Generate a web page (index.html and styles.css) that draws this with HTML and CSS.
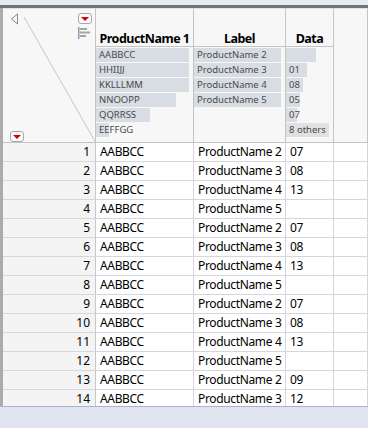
FILE: index.html
```html
<!DOCTYPE html>
<html lang="en">
<head>
  <meta charset="UTF-8">
  <title>Data Table</title>
  <link rel="stylesheet" href="styles.css">
</head>
<body>
  <div class="topbar"></div>
  <div class="divider"></div>

  <div class="frame">
    <div class="leftbar"></div>
    <div class="grid">
      <!-- header -->
      <div class="corner">
        <svg class="diag" width="93" height="134" viewBox="0 0 93 134">
          <line x1="21" y1="8" x2="93" y2="134" stroke="#c4c4c4" stroke-width="1"/>
        </svg>
        <svg class="back" width="9" height="12" viewBox="0 0 9 12">
          <path d="M7.5 1 L1.5 6 L7.5 11 Z" fill="none" stroke="#8a8a8a" stroke-width="1"/>
        </svg>
        <span class="menu menu-top"><i></i></span>
        <svg class="sort" width="13" height="12" viewBox="0 0 13 12">
          <rect x="0" y="0" width="1.5" height="12" fill="#8c9cb8"/>
          <rect x="2" y="1" width="7" height="2" fill="#9fa99f"/>
          <rect x="2" y="4.5" width="10" height="2" fill="#9fa99f"/>
          <rect x="2" y="8" width="6" height="2" fill="#9fa99f"/>
        </svg>
        <span class="menu menu-bottom"><i></i></span>
      </div>

      <div class="head">
        <div class="name">ProductName 1</div>
        <div class="bars">
          <div class="bar" style="width: 93px">AABBCC</div>
          <div class="bar" style="width: 93px">HHIIJJ</div>
          <div class="bar" style="width: 93px">KKLLLMM</div>
          <div class="bar" style="width: 80px">NNOOPP</div>
          <div class="bar" style="width: 54px">QQRRSS</div>
          <div class="bar" style="width: 13px">EEFFGG</div>
        </div>
      </div>

      <div class="head">
        <div class="name">Label</div>
        <div class="bars">
          <div class="bar" style="width: 87px">ProductName 2</div>
          <div class="bar" style="width: 87px">ProductName 3</div>
          <div class="bar" style="width: 87px">ProductName 4</div>
          <div class="bar" style="width: 87px">ProductName 5</div>
        </div>
      </div>

      <div class="head">
        <div class="name">Data</div>
        <div class="bars">
          <div class="bar" style="width: 30px"></div>
          <div class="bar" style="width: 21px">01</div>
          <div class="bar" style="width: 17px">08</div>
          <div class="bar" style="width: 14px">05</div>
          <div class="bar" style="width: 11px">07</div>
          <div class="bar other" style="width: 43px">8 others</div>
        </div>
      </div>

      <div class="head"></div>

      <!-- rows -->
      <div class="num">1</div><div class="cell">AABBCC</div><div class="cell">ProductName 2</div><div class="cell">07</div><div class="cell"></div>
      <div class="num">2</div><div class="cell">AABBCC</div><div class="cell">ProductName 3</div><div class="cell">08</div><div class="cell"></div>
      <div class="num">3</div><div class="cell">AABBCC</div><div class="cell">ProductName 4</div><div class="cell">13</div><div class="cell"></div>
      <div class="num">4</div><div class="cell">AABBCC</div><div class="cell">ProductName 5</div><div class="cell"></div><div class="cell"></div>
      <div class="num">5</div><div class="cell">AABBCC</div><div class="cell">ProductName 2</div><div class="cell">07</div><div class="cell"></div>
      <div class="num">6</div><div class="cell">AABBCC</div><div class="cell">ProductName 3</div><div class="cell">08</div><div class="cell"></div>
      <div class="num">7</div><div class="cell">AABBCC</div><div class="cell">ProductName 4</div><div class="cell">13</div><div class="cell"></div>
      <div class="num">8</div><div class="cell">AABBCC</div><div class="cell">ProductName 5</div><div class="cell"></div><div class="cell"></div>
      <div class="num">9</div><div class="cell">AABBCC</div><div class="cell">ProductName 2</div><div class="cell">07</div><div class="cell"></div>
      <div class="num">10</div><div class="cell">AABBCC</div><div class="cell">ProductName 3</div><div class="cell">08</div><div class="cell"></div>
      <div class="num">11</div><div class="cell">AABBCC</div><div class="cell">ProductName 4</div><div class="cell">13</div><div class="cell"></div>
      <div class="num">12</div><div class="cell">AABBCC</div><div class="cell">ProductName 5</div><div class="cell"></div><div class="cell"></div>
      <div class="num">13</div><div class="cell">AABBCC</div><div class="cell">ProductName 2</div><div class="cell">09</div><div class="cell"></div>
      <div class="num">14</div><div class="cell">AABBCC</div><div class="cell">ProductName 3</div><div class="cell">12</div><div class="cell"></div>
    </div>
  </div>

  <div class="status"></div>
</body>
</html>
```

FILE: styles.css
```css
body {
  margin: 0;
  width: 368px;
  height: 428px;
  overflow: hidden;
  background-color: #dfe4ee;
  font-family: "Noto Sans", "Open Sans", sans-serif;
  color: #000;
}

.topbar {
  height: 5px;
  background-color: #e6eaf4;
}

.divider {
  height: 3px;
  background-color: #737373;
}

.frame {
  display: flex;
  height: 398px;
  overflow: hidden;
  background-color: #ffffff;
}

.leftbar {
  width: 3px;
  flex-shrink: 0;
  background-color: #ababab;
}

.grid {
  flex: 1;
  display: grid;
  grid-template-columns: 93px 98px 92px 48px 1fr;
  grid-template-rows: 135px;
  grid-auto-rows: 19px;
  align-content: start;
}

/* header */
.corner {
  position: relative;
  background-color: #f7f7f7;
  border-right: 1px solid #c4c4c4;
  border-bottom: 1px solid #c4c4c4;
  border-top: 1px solid #e2e2e2;
}

.diag {
  position: absolute;
  left: 0;
  top: 0;
}

.back {
  position: absolute;
  left: 7px;
  top: 4px;
}

.menu {
  position: absolute;
  width: 12px;
  height: 9px;
  border: 1px solid #a8a8a8;
  border-radius: 3px;
  background-color: #fbfbfb;
  display: flex;
  align-items: center;
  justify-content: center;
}

.menu i {
  width: 0;
  height: 0;
  border-left: 4px solid transparent;
  border-right: 4px solid transparent;
  border-top: 4px solid #d40000;
}

.menu-top {
  left: 75px;
  top: 4px;
}

.menu-bottom {
  left: 7px;
  top: 122px;
}

.sort {
  position: absolute;
  left: 75px;
  top: 18px;
}

.head {
  background-color: #f7f7f7;
  border-right: 1px solid #c4c4c4;
  border-bottom: 1px solid #c4c4c4;
  border-top: 1px solid #e2e2e2;
  display: flex;
  flex-direction: column;
}

.name {
  height: 38px;
  border-bottom: 1px solid #c4c4c4;
  display: flex;
  align-items: flex-end;
  justify-content: center;
  box-sizing: border-box;
  font-weight: bold;
  font-size: 12.5px;
  line-height: 15px;
  letter-spacing: -0.5px;
}

.bars {
  padding-top: 1px;
  display: flex;
  flex-direction: column;
  gap: 1px;
}

.bar {
  height: 14px;
  line-height: 14px;
  background-color: #d8dce3;
  font-size: 9.5px;
  color: #4a4a4a;
  padding-left: 3px;
  box-sizing: border-box;
  white-space: nowrap;
  overflow: visible;
}

.bar.other {
  background-color: #e1e1e1;
}

/* rows */
.num {
  background-color: #f4f4f4;
  border-right: 1px solid #c8c8c8;
  border-bottom: 1px solid #d6d6de;
  text-align: right;
  padding-right: 5px;
  font-size: 12px;
  line-height: 18px;
}

.cell {
  border-right: 1px solid #d6d6de;
  border-bottom: 1px solid #d6d6de;
  padding-left: 4px;
  font-size: 12px;
  letter-spacing: -0.35px;
  line-height: 18px;
  white-space: nowrap;
  overflow: hidden;
}

.status {
  height: 21px;
  border-top: 1px solid #a9b2d0;
  background-color: #dfe4ee;
}
```
